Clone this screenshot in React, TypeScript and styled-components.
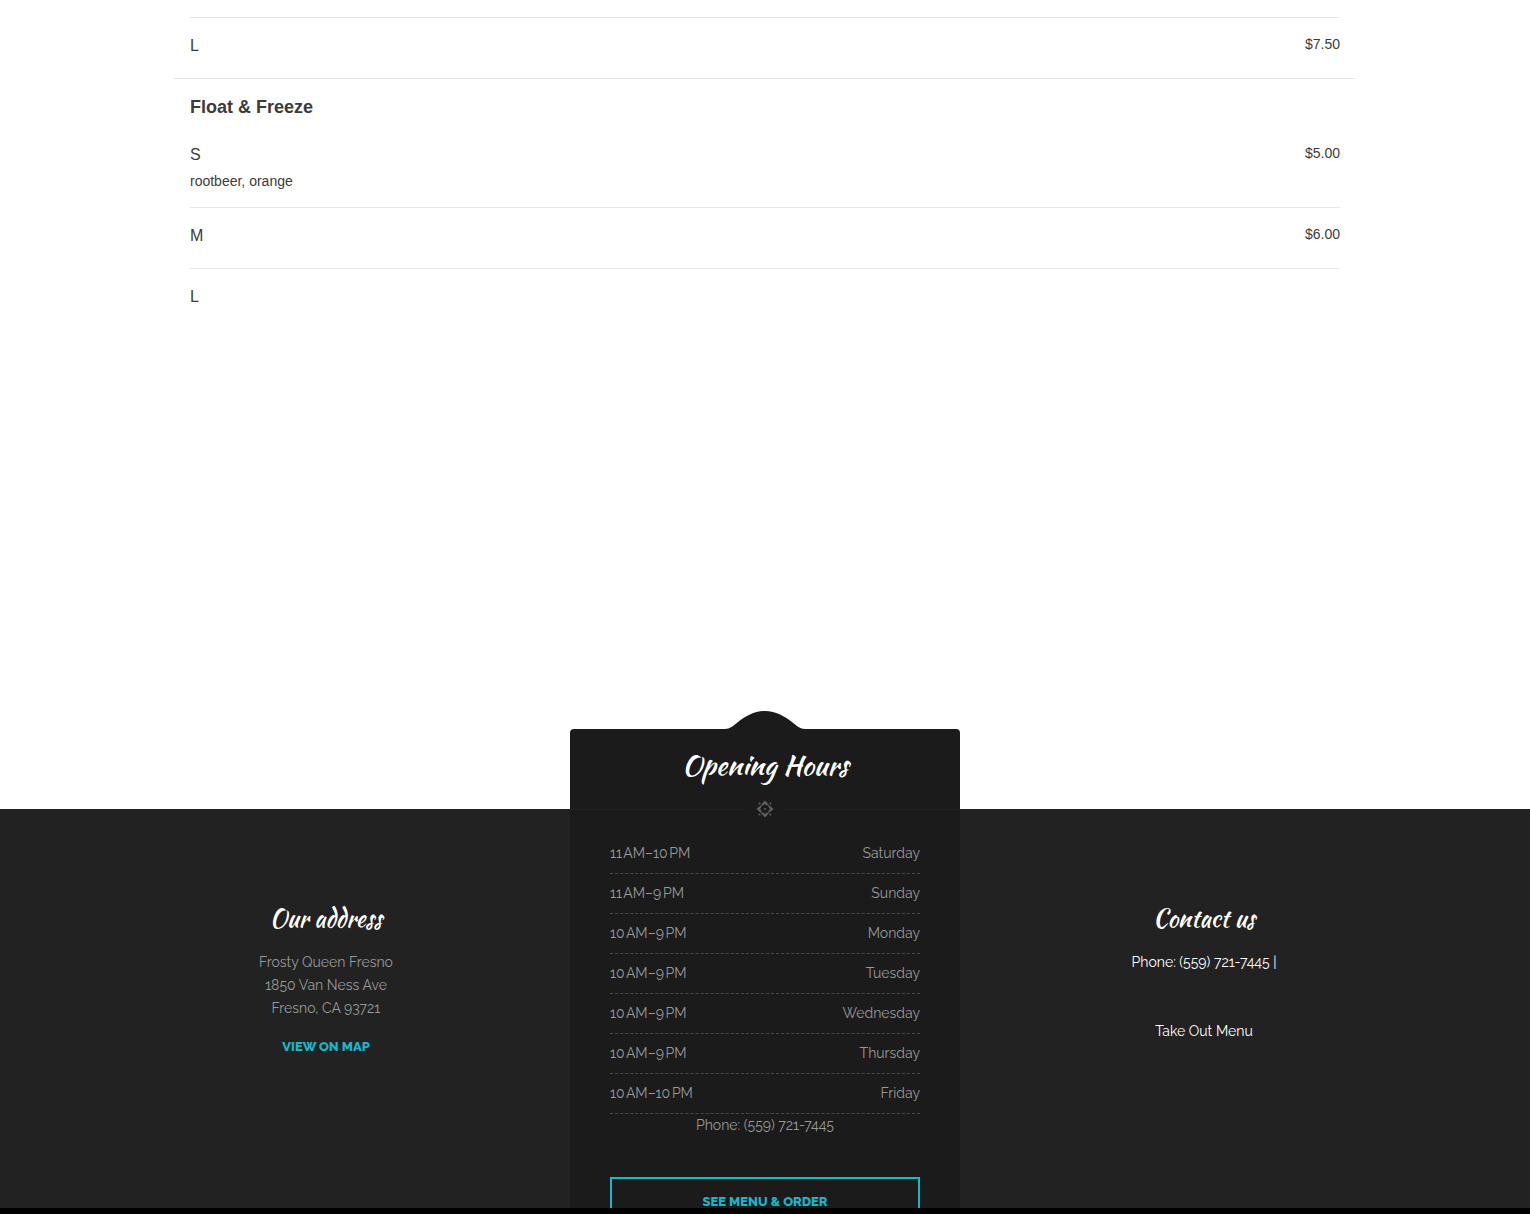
import React from "react";
import styled, { createGlobalStyle } from "styled-components";

const body = `Raleway, Lato, "Open Sans", sans-serif`;
const script = `"Kaushan Script", "Liberation Serif", serif`;
const accent = "#1ab6c9";

const Global = createGlobalStyle`
  *, *::before, *::after { box-sizing: border-box; }
  body { margin: 0; background: #fff; }
  h2, h3, p, ul { margin: 0; padding: 0; }
  ul { list-style: none; }
`;

const Page = styled.div`
  display: flex;
  flex-direction: column;
  height: 100vh;
  font-family: "Liberation Sans", Arial, sans-serif;
  color: #3b3b3b;
`;

const Scroll = styled.div`
  flex: 1;
  min-height: 0;
  overflow: hidden;
`;

const BottomBar = styled.div`
  flex: none;
  height: 6px;
  background: #000;
`;

const Menu = styled.main`
  max-width: 1182px;
  margin: 0 auto;
  padding: 17px 0 480px;
`;

const Section = styled.section`
  padding: 0 16px;

  & + & {
    border-top: 1px solid #e8e8e8;
  }
`;

const SectionTitle = styled.h3`
  padding: 14px 0 6px;
  font-size: 18px;
  line-height: 28px;
`;

const MenuRow = styled.li<{ $ruled: boolean }>`
  display: flex;
  justify-content: space-between;
  align-items: flex-start;
  padding: 16px 0;
  border-top: ${(p) => (p.$ruled ? "1px solid #e8e8e8" : "none")};
`;

const ItemName = styled.p`
  margin-bottom: 4px;
  font-size: 16px;
  line-height: 24px;
`;

const ItemText = styled.p`
  font-size: 14px;
  line-height: 20px;
`;

const Footer = styled.footer`
  display: grid;
  grid-template-columns: 1fr 390px 1fr;
  padding: 0 82px;
  background: #222;
  font-family: ${body};
  font-size: 14px;
  line-height: 23px;
  text-align: center;
  color: #999;
`;

const Column = styled.section<{ $bright?: boolean }>`
  padding-top: 95px;
  color: ${(p) => (p.$bright ? "#fff" : "inherit")};
`;

const ColumnTitle = styled.h2`
  margin-bottom: 17px;
  font: 400 24px/30px ${script};
  color: #fff;
`;

const TextLink = styled.a`
  color: inherit;
  text-decoration: none;
`;

const MapLink = styled(TextLink)`
  display: inline-block;
  margin-top: 15px;
  font-size: 13px;
  font-weight: 800;
  color: ${accent};
`;

const TakeOut = styled.p`
  margin-top: 46px;
`;

const Card = styled.section`
  position: relative;
  margin-top: -80px;
  padding: 16px 40px 60px;
  border-radius: 4px;
  background: #1b1b1b;
`;

const Bump = styled.svg`
  position: absolute;
  left: 50%;
  bottom: 100%;
  width: 80px;
  height: 18px;
  transform: translateX(-50%);
`;

const CardTitle = styled.h2`
  font: 400 28px/40px ${script};
  color: #fff;
`;

const Divider = styled.div`
  display: flex;
  align-items: center;
  gap: 10px;
  margin: 15px -40px 16px;

  &::before, &::after {
    content: "";
    flex: 1;
    border-top: 1px solid #222;
  }
`;

const HoursRow = styled.li`
  display: flex;
  justify-content: space-between;
  padding: 8px 0;
  border-bottom: 1px dashed #484848;
`;

const OrderButton = styled.button`
  display: block;
  width: 100%;
  height: 48px;
  margin-top: 40px;
  border: 2px solid ${accent};
  background: transparent;
  font: 800 13px/23px ${body};
  color: ${accent};
`;

type Item = { name: string; price?: string; text?: string };

const hours = [
  ["11\u202fAM–10\u202fPM", "Saturday"],
  ["11\u202fAM–9\u202fPM", "Sunday"],
  ["10\u202fAM–9\u202fPM", "Monday"],
  ["10\u202fAM–9\u202fPM", "Tuesday"],
  ["10\u202fAM–9\u202fPM", "Wednesday"],
  ["10\u202fAM–9\u202fPM", "Thursday"],
  ["10\u202fAM–10\u202fPM", "Friday"],
];

const MenuSection = ({ title, items }: { title?: string; items: Item[] }) => (
  <Section>
    {title && <SectionTitle>{title}</SectionTitle>}
    <ul>
      {items.map((item, i) => (
        <MenuRow key={item.name} $ruled={!title || i > 0}>
          <div>
            <ItemName>{item.name}</ItemName>
            {item.text && <ItemText>{item.text}</ItemText>}
          </div>
          {item.price && <ItemText>{item.price}</ItemText>}
        </MenuRow>
      ))}
    </ul>
  </Section>
);

const Rosette = () => (
  <svg width="18" height="18" viewBox="-9 -9 18 18" fill="#606060" aria-hidden="true">
    {[0, 90, 180, 270].map((turn) => (
      <g key={turn} transform={`rotate(${turn})`}>
        <path d="M0 -8.5 L2.8 -5.4 L1.8 -3.6 L0 -5 L-1.8 -3.6 L-2.8 -5.4 Z" />
        <path d="M2.6 -5.2 L5.2 -2.6 L4 -1.4 L3.2 -3.2 L1.4 -4 Z" />
        <circle cx="5.4" cy="-5.4" r="1" />
      </g>
    ))}
    <circle r="1" />
  </svg>
);

export default function App() {
  return (
    <Page>
      <Global />
      <Scroll>
        <Menu>
          <MenuSection items={[{ name: "L", price: "$7.50" }]} />
          <MenuSection
            title="Float & Freeze"
            items={[
              { name: "S", price: "$5.00", text: "rootbeer, orange" },
              { name: "M", price: "$6.00" },
              { name: "L" },
            ]}
          />
        </Menu>
        <Footer>
          <Column>
            <ColumnTitle>Our address</ColumnTitle>
            <p>
              Frosty Queen Fresno
              <br />
              1850 Van Ness Ave
              <br />
              Fresno, CA 93721
            </p>
            <MapLink href="#map">VIEW ON MAP</MapLink>
          </Column>
          <Card>
            <Bump viewBox="0 0 80 18" aria-hidden="true">
              <path d="M0 18 C5 18 8 15 13 11 C21 5 29 0 40 0 C51 0 59 5 67 11 C72 15 75 18 80 18 Z" fill="#1b1b1b" />
            </Bump>
            <CardTitle>Opening Hours</CardTitle>
            <Divider>
              <Rosette />
            </Divider>
            <ul>
              {hours.map(([time, day]) => (
                <HoursRow key={day}>
                  <span>{time}</span>
                  <span>{day}</span>
                </HoursRow>
              ))}
            </ul>
            <p>Phone: (559) 721-7445</p>
            <OrderButton type="button">SEE MENU &amp; ORDER</OrderButton>
          </Card>
          <Column $bright>
            <ColumnTitle>Contact us</ColumnTitle>
            <p>
              <TextLink href="tel:+15597217445">Phone: (559) 721-7445</TextLink> |
            </p>
            <TakeOut>
              <TextLink href="#menu">Take Out Menu</TextLink>
            </TakeOut>
          </Column>
        </Footer>
      </Scroll>
      <BottomBar />
    </Page>
  );
}
